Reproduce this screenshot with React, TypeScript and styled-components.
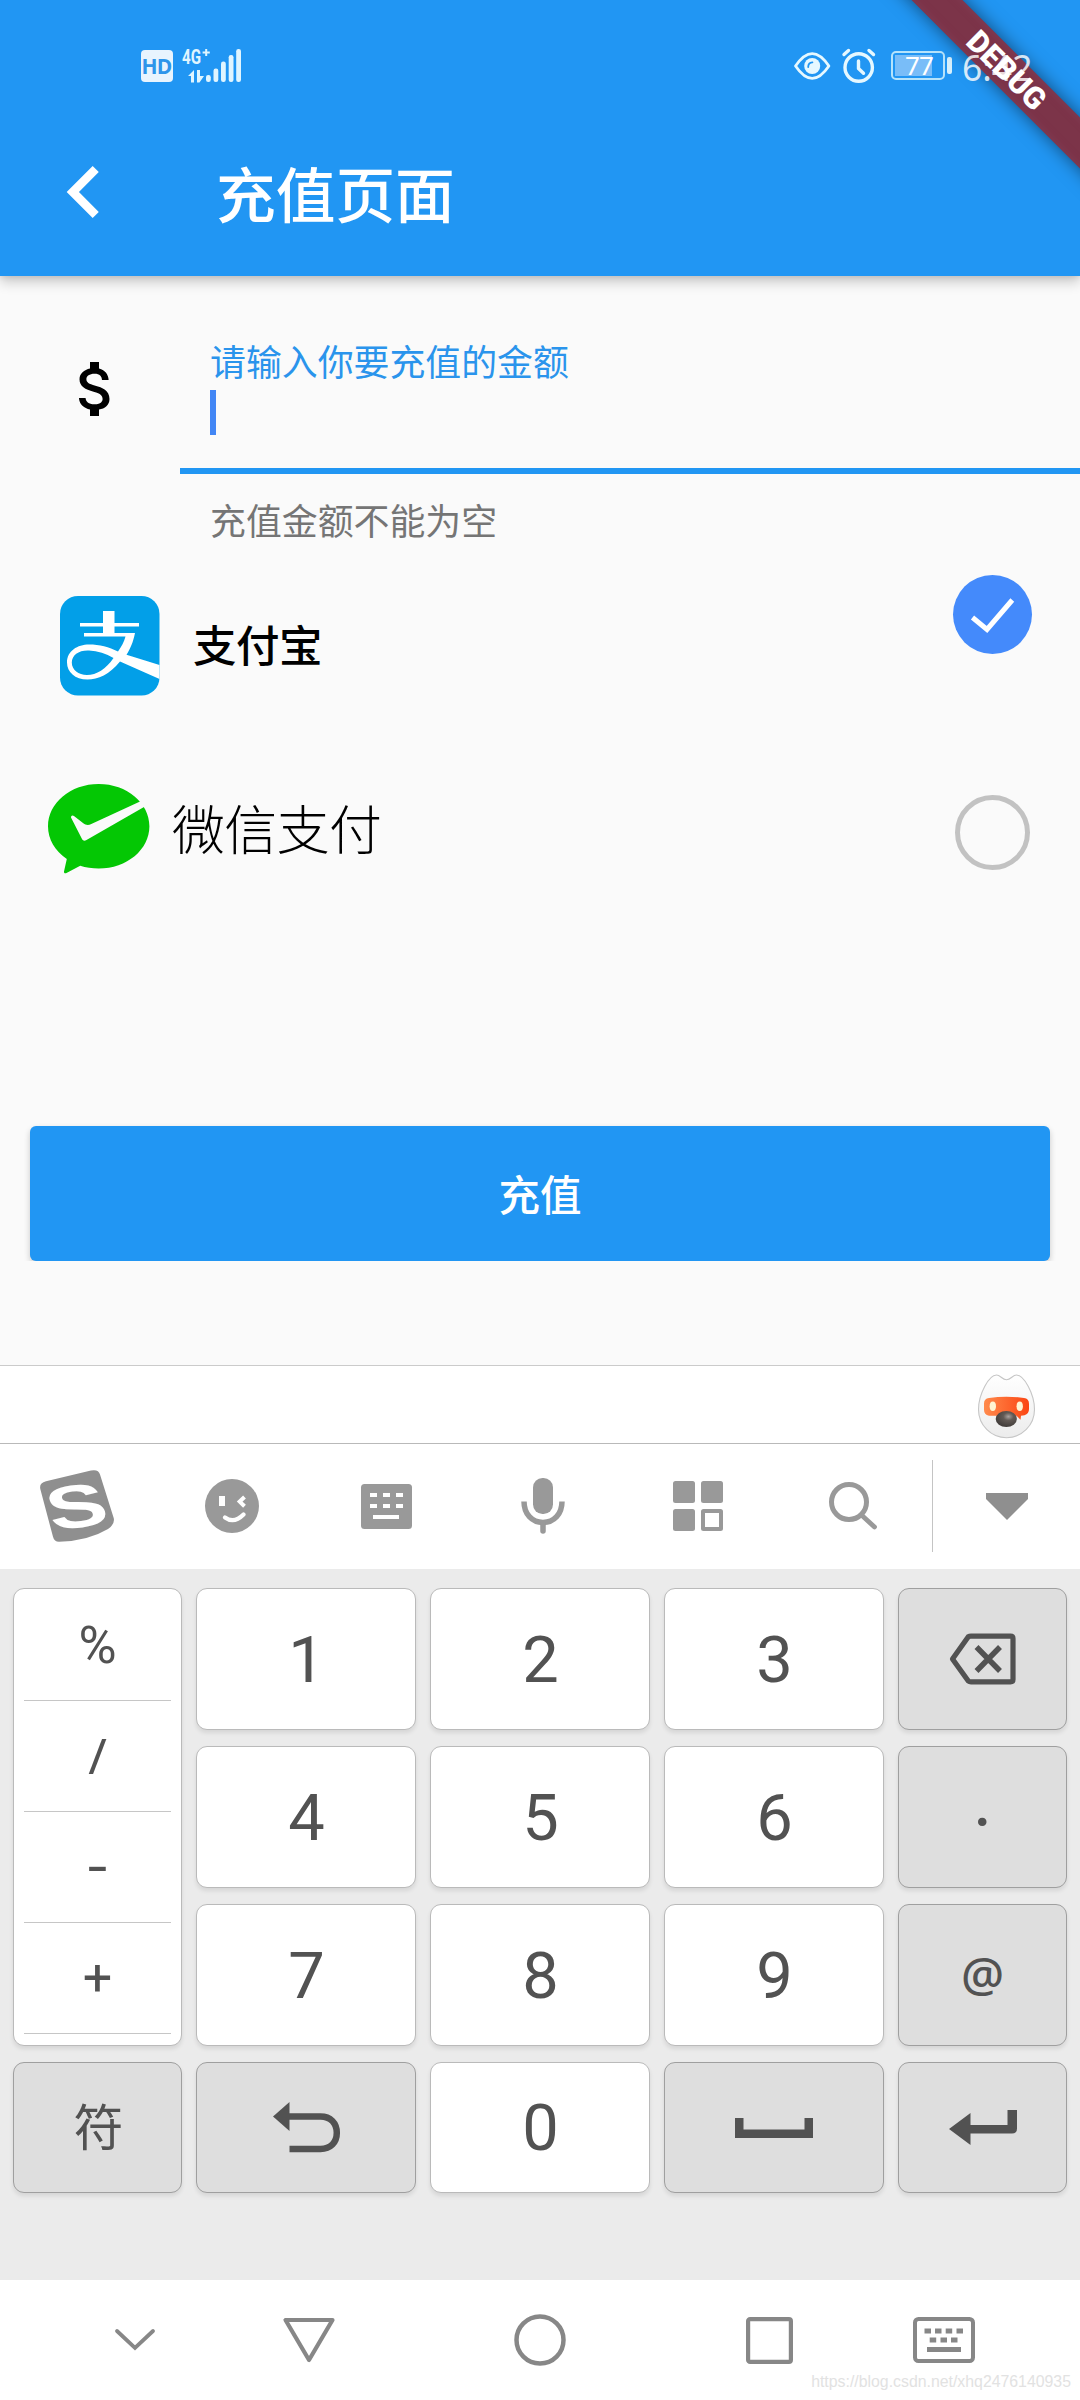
import React from "react";
import styled, { createGlobalStyle, css } from "styled-components";

const CJK = '"Noto Sans CJK SC", sans-serif';
const KEY_INK = "#525252";

const GlobalStyle = createGlobalStyle`
  html, body { margin: 0; padding: 0; background: #fafafa; }
  * { box-sizing: border-box; }
  svg { display: block; flex: none; overflow: visible; }
`;

const Screen = styled.div`
  width: 1080px;
  height: 2400px;
  display: flex;
  flex-direction: column;
  position: relative;
  overflow: hidden;
  background: #fafafa;
  font-family: ${CJK};
`;

/* ---------- header ---------- */
const Header = styled.header`
  flex: none;
  height: 276px;
  background: #2196f3;
  box-shadow: 0 6px 12px rgba(0, 0, 0, 0.2), 0 0 6px rgba(0, 0, 0, 0.12);
`;

const StatusBar = styled.div`
  height: 108px;
  padding: 23px 0 0 140.500px;
  display: flex;
  align-items: center;
`;

const HdBadge = styled.span`
  width: 32px;
  height: 32px;
  margin-right: 8.500px;
  border-radius: 4px;
  background: #e8f4fe;
  color: #2e95ea;
  font: 700 21px/32px "Open Sans", sans-serif;
  letter-spacing: -0.8px;
  text-align: center;
`;

const StatusRight = styled.div`
  margin-left: auto;
  width: 286px;
  display: flex;
  align-items: center;
`;

const Battery = styled.div`
  width: 54px;
  height: 29px;
  margin-left: 15px;
  padding: 2px;
  border: 2px solid #b5e3fb;
  border-radius: 5px;
`;

const BatteryLevel = styled.div`
  width: 37px;
  height: 21px;
  padding-left: 10px;
  background: #79bdf8;
  color: #fff;
  font: 400 26px/21px "Noto Sans", sans-serif;
  letter-spacing: -0.8px;
`;

const BatteryTip = styled.div`
  width: 5px;
  height: 17px;
  margin-left: 2px;
  border-radius: 2px;
  background: #d6f0fd;
`;

const Clock = styled.span`
  position: relative;
  z-index: 3;
  margin-left: 10px;
  padding-top: 2px;
  color: rgba(255, 255, 255, 0.82);
  font: 400 35.500px/40px "Noto Sans", sans-serif;
`;

const AppBar = styled.div`
  height: 168px;
  padding-left: 32px;
  display: flex;
  align-items: center;
`;

const Title = styled.h1`
  margin: 0 0 0 80px;
  color: #fff;
  font: 500 59.700px/80px ${CJK};
`;

const DebugRibbon = styled.div`
  position: absolute;
  z-index: 2;
  left: 857px;
  top: 52px;
  width: 300px;
  height: 36px;
  transform: rotate(45deg);
  background: #7c3449;
  box-shadow: 0 0 18px rgba(0, 0, 0, 0.5), inset 0 0 8px rgba(132, 64, 90, 0.8);
  color: #fff;
  font: 900 30.600px/37px Roboto, sans-serif;
  text-align: center;
`;

/* ---------- amount field ---------- */
const AmountRow = styled.section`
  height: 269px;
  display: flex;
`;

const CurrencyCell = styled.div`
  width: 180px;
  padding: 77px 0 0 60px;
`;

const Field = styled.div`
  flex: 1;
  padding-top: 65px;
`;

const FieldInner = styled.div`
  height: 133px;
  padding: 0 30px;
  border-bottom: 6px solid #2196f3;
`;

const FieldText = styled.div<{ $tone: string }>`
  height: 44px;
  color: ${(p) => p.$tone};
  font: 400 35.900px/38px ${CJK};
  white-space: nowrap;
`;

const Caret = styled.div`
  width: 6px;
  height: 45px;
  margin-top: 5px;
  background: #4286f5;
`;

const Helper = styled(FieldText)`
  margin: 26px 30px 0;
`;

/* ---------- payment methods ---------- */
const PayRow = styled.div<{ $height: number; $left: number; $top: number; $logoDrop: number }>`
  height: ${(p) => p.$height}px;
  padding: ${(p) => p.$top}px 0 0 ${(p) => p.$left}px;
  display: flex;
  align-items: flex-start;
  > svg:first-child { margin-top: ${(p) => p.$logoDrop}px; }
`;

const PayName = styled.span<{ $size: number; $weight: number; $gap: number; $drop: number; $track?: number }>`
  margin: ${(p) => p.$drop}px 0 0 ${(p) => p.$gap}px;
  font-family: ${CJK};
  font-size: ${(p) => p.$size}px;
  font-weight: ${(p) => p.$weight};
  line-height: 70px;
  letter-spacing: ${(p) => p.$track ?? 0}px;
  color: #000;
`;

const Check = styled.span<{ $checked?: boolean }>`
  margin-left: auto;
  flex: none;
  display: flex;
  border-radius: 50%;
  ${(p) =>
    p.$checked
      ? css`
          width: 79px;
          height: 79px;
          margin-right: 48px;
          background: #448afb;
        `
      : css`
          width: 75px;
          height: 75px;
          margin: 2px 50px 0 auto;
          border: 5px solid #c2c2c2;
        `}
`;

const SubmitButton = styled.button`
  width: 1020px;
  height: 135px;
  margin: 177px 30px 0;
  padding: 0;
  border: 0;
  border-radius: 6px;
  background: #2196f3;
  box-shadow: 0 3px 6px rgba(0, 0, 0, 0.2);
  clip-path: inset(-6px -10px 0 -10px);
  color: #fff;
  font: 500 41.500px/131px ${CJK};
`;

/* ---------- keyboard ---------- */
const CandidateBar = styled.div`
  height: 79px;
  margin-top: auto;
  padding: 7px 42px 0 0;
  display: flex;
  justify-content: flex-end;
  border-top: 1px solid #cbcbcb;
  border-bottom: 1px solid #b9b9b9;
  background: #fff;
`;

const Toolbar = styled.div`
  height: 125px;
  padding-bottom: 1px;
  display: flex;
  align-items: center;
  background: #fff;
`;

const Tool = styled.div<{ $shift?: number }>`
  width: 155px;
  padding-right: ${(p) => p.$shift ?? 0}px;
  display: flex;
  justify-content: center;
`;

const ToolDivider = styled.div`
  width: 1px;
  height: 92px;
  margin-left: 2px;
  background: #c4c4c4;
`;

const HideTool = styled(Tool)`
  width: 147px;
`;

const Keypad = styled.div`
  height: 711px;
  padding: 19px 13px;
  display: grid;
  grid-template-columns: 169px 220px 220px 220px 169px;
  grid-template-rows: 142px 142px 142px 131px;
  gap: 16px 14px;
  background: #ebebeb;
`;

const Key = styled.div<{ $dark?: boolean; $size?: number }>`
  display: flex;
  align-items: center;
  justify-content: center;
  border: 1px solid ${(p) => (p.$dark ? "#9f9f9f" : "#bababa")};
  border-radius: 11px;
  background: ${(p) => (p.$dark ? "#dedede" : "#fff")};
  box-shadow: 0 3px 4px rgba(0, 0, 0, 0.09);
  color: ${KEY_INK};
  font: 400 ${(p) => p.$size ?? 65}px/1 Roboto, ${CJK};
`;

const DigitKey = styled(Key)`
  padding: 2px 0 0 1px;
`;

const DotKey = styled(Key)`
  padding-top: 11px;
`;

const AtKey = styled(Key)`
  font-family: "Noto Sans", sans-serif;
  font-weight: 500;
  padding-bottom: 2px;
`;

const HanKey = styled(Key)`
  font-family: ${CJK};
  padding: 0 0 8px 2px;
`;

const SymbolColumn = styled(Key)`
  grid-row: span 3;
  flex-direction: column;
  justify-content: flex-start;
  padding: 0 10px;
`;

const SymbolItem = styled.div<{ $face?: string; $size?: number; $line?: number }>`
  width: 147px;
  height: 111px;
  border-bottom: 1px solid #c6c6c6;
  font: 400 ${(p) => p.$size ?? 52}px / ${(p) => p.$line ?? 110}px ${(p) => p.$face ?? "Roboto"}, sans-serif;
  text-align: center;
  &:first-child { height: 112px; }
`;

/* ---------- navigation ---------- */
const NavBar = styled.nav`
  height: 120px;
  padding-left: 115px;
  display: flex;
  align-items: center;
  position: relative;
  background: #fff;
`;

const NavItem = styled.span<{ $gap?: number }>`
  margin-left: ${(p) => p.$gap ?? 0}px;
`;

const Watermark = styled.span`
  position: absolute;
  right: 9px;
  bottom: 7px;
  color: #e2e2e2;
  font: 400 15.850px/22px "Liberation Sans", sans-serif;
  white-space: nowrap;
`;

/* ---------- drawings ---------- */
const Signal = () => (
  <svg width="62" height="36" viewBox="0 0 62 36" fill="#e0f5ff">
    <text x="1" y="16" fontFamily="Roboto" fontWeight="700" fontSize="20" textLength="19" lengthAdjust="spacingAndGlyphs">4G</text>
    <path d="M24.2 1h2v2.500h2.600v2h-2.600V8h-2V5.500h-2.600v-2h2.600z" />
    <path d="M13 22v12.500h-3V28H7zM16 22h3v6h4l-4.500 6.500H16z" />
    {[[25, 27], [32.500, 20.500], [40, 13.500], [47.700, 7], [55.200, 1]].map(([x, y]) => (
      <rect key={x} x={x} y={y} width="4.800" height={34 - y} rx="2.200" />
    ))}
  </svg>
);

const Eye = () => (
  <svg width="37" height="30" viewBox="0 0 37 30">
    <path d="M1.500 15C8 5.500 13.500 2.600 18.200 2.600S28.500 5.500 34.900 15C28.500 24.500 23 27.400 18.200 27.400S8 24.500 1.500 15z" fill="none" stroke="#e6f8ff" strokeWidth="2.800" strokeLinejoin="round" />
    <circle cx="18.200" cy="15" r="8" fill="#e6f8ff" />
    <path d="M14.200 16c0-3 1.500-4.500 4.200-4.700" fill="none" stroke="#2196f3" strokeWidth="1.800" strokeLinecap="round" />
  </svg>
);

const Alarm = () => (
  <svg width="34" height="34" viewBox="0 0 34 34" fill="none" stroke="#e6f8ff" strokeLinecap="round" strokeLinejoin="round">
    <circle cx="16.700" cy="18.500" r="13.700" strokeWidth="3.400" />
    <path d="M16.500 12v7.500l5 4.800" strokeWidth="3.400" />
    <path d="M2 5.500l4.500-4M27 1.500l4.500 4" strokeWidth="3.400" />
  </svg>
);

const AlipayLogo = () => (
  <svg width="100" height="100" viewBox="0 0 100 100">
    <rect width="99.500" height="99.500" rx="18" fill="#029fe8" />
    <g fill="#fff">
      <path d="M43 15h11.500v12H79v3.500H54.500V37H75c-2 9.500-4.500 15.500-8.500 21.700L99.500 69v14L60 65.500c-10.500 13-22 18-32.500 18C15 83.500 7 76 7 66.500 7 55 17.500 48.500 29 48.500c10.500 0 20 2.600 29 7 3.500-5 6-9.500 7.500-15H24v-3.500h19V30.500H20V27h23zM29 54.500C19 54 11.800 59 11.800 66.500S18.500 79 27 79c9.500 0 19-6 26.500-17C46 57.500 38 55 29 54.500z" />
    </g>
  </svg>
);

const WechatPayLogo = () => (
  <svg width="102" height="90" viewBox="0 0 102 90">
    <path d="M50.700 0C79 0 101.400 19 101.400 42.300S79 84.600 50.700 84.600c-6.500 0-13-1-18.500-2.800L18.500 89c-1.500.7-2.800 0-2.500-1.500L18.800 75C7 67 0 55.500 0 42.300 0 19 22.500 0 50.700 0z" fill="#04c704" />
    <path d="M23 33.500c0-2 1.500-2.800 3.300-1.300l9 7c2.500 2 5 2.200 8 .8L91.500 17.800 102 13v7l-6 3-57.500 33c-2 1.200-3.500.8-4.500-1z" fill="#fafafa" />
  </svg>
);

const CheckMark = () => (
  <svg width="79" height="79" viewBox="0 0 79 79" fill="none" stroke="#fff" strokeWidth="5">
    <path d="M19.500 42.500L34 54.500 59.300 25" />
  </svg>
);

const Mascot = () => (
  <svg width="62" height="68" viewBox="0 0 62 68">
    <defs>
      <linearGradient id="face" x1="0" y1="0" x2="0" y2="1">
        <stop offset="0" stopColor="#fff" />
        <stop offset="1" stopColor="#ececec" />
      </linearGradient>
      <linearGradient id="mask">
        <stop offset="0" stopColor="#ff8a4c" />
        <stop offset="1" stopColor="#fb4512" />
      </linearGradient>
      <radialGradient id="nose" cx="0.6" cy="0.35" r="0.6">
        <stop offset="0" stopColor="#aaa29e" />
        <stop offset="0.4" stopColor="#625a55" />
        <stop offset="1" stopColor="#45403d" />
      </radialGradient>
    </defs>
    <path d="M20.500 2c4 0 5.500 4.700 10 4.700S36.500 2 40.500 2C48 2 58.500 21 58.500 36.500S46 64.700 30.500 64.700 2.500 52 2.500 36.500 13 2 20.500 2z" fill="url(#face)" stroke="#c6c6c6" strokeWidth="1.100" />
    <path d="M13 25q17.500-2.500 35 0q5 .5 5 6v5q0 5-4.500 6.200l-3.500.6-.5 4-4-4H13q-5-.8-5-6V30.500q0-5 5-5.500z" fill="url(#mask)" />
    <ellipse cx="16.800" cy="33.300" rx="3.200" ry="4.800" fill="#fff4d2" />
    <ellipse cx="43.700" cy="33.300" rx="3.200" ry="4.800" fill="#fff4d2" />
    <ellipse cx="30.300" cy="46" rx="10.600" ry="8" fill="url(#nose)" />
  </svg>
);

const SogouLogo = () => (
  <svg width="78" height="76" viewBox="0 0 78 76">
    <path d="M8 13.300L53 2.500q7.500-1.500 9 4L75.700 50q1.500 6-5.700 11Q50 73 21 73.800q-4.800 0-6-5L2.300 21Q1 15 8 13.300z" fill="#8f8f8f" />
    <text transform="translate(38.500 38) rotate(-8) skewX(8) scale(1.46 1)" x="0" y="21.500" textAnchor="middle" fontFamily="Liberation Sans" fontWeight="700" fontSize="61" fill="#fff">S</text>
  </svg>
);

const Smiley = () => (
  <svg width="54" height="54" viewBox="0 0 54 54">
    <ellipse cx="27" cy="27" rx="27" ry="27" fill="#999" />
    <path d="M14 17h6v10h-6z" fill="#fff" />
    <path d="M39.500 18l-4.800 4.600 4.800 4.600" fill="none" stroke="#fff" strokeWidth="4" />
    <path d="M20 38.500q9 6.500 18.500-3" fill="none" stroke="#fff" strokeWidth="4.200" strokeLinecap="round" />
  </svg>
);

const KeyboardSolid = () => (
  <svg width="51" height="45" viewBox="0 0 51 45">
    <rect width="51" height="45" rx="3.500" fill="#999" />
    <path d="M9 9h7v4H9zM22 9h7v4h-7zM35 9h7v4h-7zM9 20h7v4H9zM22 20h7v4h-7zM35 20h7v4h-7zM12 31h26v4H12z" fill="#fff" />
  </svg>
);

const Mic = () => (
  <svg width="44" height="56" viewBox="0 0 44 56">
    <rect x="12" y="0" width="20" height="36" rx="9.500" fill="#999" />
    <path d="M3 23.500c0 12.500 8 21 19 21s19-8.500 19-21" fill="none" stroke="#999" strokeWidth="5.500" />
    <path d="M22 45v8" stroke="#999" strokeWidth="5.500" strokeLinecap="round" />
  </svg>
);

const Apps = () => (
  <svg width="50" height="50" viewBox="0 0 50 50" fill="#999">
    <rect width="22" height="22" rx="2.500" />
    <rect x="28" width="22" height="22" rx="2.500" />
    <rect y="28" width="22" height="22" rx="2.500" />
    <rect x="30" y="30" width="18" height="18" rx="0.500" fill="none" stroke="#999" strokeWidth="4" />
  </svg>
);

const Search = () => (
  <svg width="50" height="48" viewBox="0 0 50 48" fill="none" stroke="#999">
    <circle cx="21" cy="20" r="17.500" strokeWidth="5" />
    <path d="M34 33.500L46.500 45" strokeWidth="4.800" strokeLinecap="round" />
  </svg>
);

const HideArrow = () => (
  <svg width="42" height="27" viewBox="0 0 42 27">
    <path d="M0 0h42v6L21 27 0 6z" fill="#8f8f8f" />
  </svg>
);

const Backspace = () => (
  <svg width="68" height="52" viewBox="0 0 68 52" fill="none" stroke={KEY_INK}>
    <path d="M3.500 26L19.300 3.800Q20.300 3.200 22 3.200H61.500Q64 3.200 64 5.500v41q0 2.300-2.500 2.300H22q-1.700 0-2.700-.8z" strokeWidth="5.200" strokeLinejoin="round" />
    <path d="M27.500 14L51 38M51 14L27.500 38" strokeWidth="5.500" />
  </svg>
);

const UndoArrow = () => (
  <svg width="67" height="51" viewBox="0 0 67 51">
    <path d="M0 14.500L16.500 0v29z" fill={KEY_INK} />
    <path d="M15 14.500h32.500c10 0 16.300 6.500 16.300 16.300S57.500 47 47.500 47H16.500" fill="none" stroke={KEY_INK} strokeWidth="6.500" />
  </svg>
);

const SpaceBar = () => (
  <svg width="78" height="20" viewBox="0 0 78 20">
    <path d="M0 0h8.500v11.500h61V0H78v20H0z" fill={KEY_INK} />
  </svg>
);

const EnterArrow = () => (
  <svg width="68" height="36" viewBox="0 0 68 36">
    <path d="M0 19L21.500 3v12H58.500V0H68v18.500q0 5-5 5H21.500V35z" fill={KEY_INK} />
  </svg>
);

const NavKeyboard = () => (
  <svg width="62" height="46" viewBox="0 0 62 46">
    <rect x="2" y="2" width="58" height="42" rx="3.500" fill="none" stroke="#878787" strokeWidth="4" />
    <path d="M11.500 11.500h6.500v5h-6.500zM22 11.500h6.500v5H22zM32.700 11.500h6.500v5h-6.500zM43.500 11.500H50v5h-6.500zM16.700 20.500h6.500v5h-6.500zM27.500 20.500H34v5h-6.500zM38 20.500h6.500v5H38zM14 30h34v5H14z" fill="#878787" />
  </svg>
);

export default function App() {
  return (
    <>
      <GlobalStyle />
      <Screen>
        <Header>
          <StatusBar>
            <HdBadge>HD</HdBadge>
            <Signal />
            <StatusRight>
              <Eye />
              <svg width="11" height="1" />
              <Alarm />
              <Battery>
                <BatteryLevel>77</BatteryLevel>
              </Battery>
              <BatteryTip />
              <Clock>6:42</Clock>
            </StatusRight>
          </StatusBar>
          <AppBar>
            <svg width="104" height="104" viewBox="0 0 24 24" fill="#fff">
              <path d="M15.410 7.410L14 6l-6 6 6 6 1.410-1.410L10.830 12z" />
            </svg>
            <Title>充值页面</Title>
          </AppBar>
        </Header>
        <DebugRibbon>DEBUG</DebugRibbon>

        <AmountRow>
          <CurrencyCell>
            <svg width="72" height="72" viewBox="0 0 24 24">
              <path d="M11.800 10.900c-2.270-.59-3-1.200-3-2.150 0-1.090 1.010-1.850 2.700-1.850 1.780 0 2.440.85 2.500 2.100h2.210c-.07-1.720-1.120-3.300-3.210-3.810V3h-3v2.160c-1.940.42-3.500 1.680-3.500 3.610 0 2.310 1.910 3.460 4.700 4.130 2.500.6 3 1.480 3 2.410 0 .69-.49 1.790-2.700 1.790-2.060 0-2.870-.92-2.980-2.100h-2.200c.12 2.190 1.760 3.420 3.680 3.830V21h3v-2.150c1.950-.37 3.500-1.500 3.500-3.550 0-2.840-2.430-3.810-4.700-4.400z" />
            </svg>
          </CurrencyCell>
          <Field>
            <FieldInner>
              <FieldText $tone="#2a94ec">请输入你要充值的金额</FieldText>
              <Caret />
            </FieldInner>
            <Helper $tone="#757575">充值金额不能为空</Helper>
          </Field>
        </AmountRow>

        <PayRow $height={202} $left={60} $top={30} $logoDrop={21}>
          <AlipayLogo />
          <PayName $size={43.500} $weight={500} $gap={33} $drop={34} $track={-0.500}>支付宝</PayName>
          <Check $checked>
            <CheckMark />
          </Check>
        </PayRow>
        <PayRow $height={202} $left={48} $top={46} $logoDrop={-9}>
          <WechatPayLogo />
          <PayName $size={53} $weight={300} $gap={22} $drop={-1} $track={-0.700}>微信支付</PayName>
          <Check />
        </PayRow>

        <SubmitButton>充值</SubmitButton>

        <CandidateBar>
          <Mascot />
        </CandidateBar>
        <Toolbar>
          <Tool $shift={2}><SogouLogo /></Tool>
          <Tool $shift={1}><Smiley /></Tool>
          <Tool $shift={2}><KeyboardSolid /></Tool>
          <Tool><Mic /></Tool>
          <Tool><Apps /></Tool>
          <Tool><Search /></Tool>
          <ToolDivider />
          <HideTool><HideArrow /></HideTool>
        </Toolbar>
        <Keypad>
          <SymbolColumn>
            <SymbolItem $line={114}>%</SymbolItem>
            <SymbolItem $face="Noto Sans" $size={50} $line={108}>/</SymbolItem>
            <SymbolItem $face="Inter">-</SymbolItem>
            <SymbolItem>+</SymbolItem>
          </SymbolColumn>
          <DigitKey>1</DigitKey>
          <DigitKey>2</DigitKey>
          <DigitKey>3</DigitKey>
          <Key $dark><Backspace /></Key>
          <DigitKey>4</DigitKey>
          <DigitKey>5</DigitKey>
          <DigitKey>6</DigitKey>
          <DotKey $dark $size={76}>·</DotKey>
          <DigitKey>7</DigitKey>
          <DigitKey>8</DigitKey>
          <DigitKey>9</DigitKey>
          <AtKey $dark $size={48}>@</AtKey>
          <HanKey $dark $size={50}>符</HanKey>
          <Key $dark><UndoArrow /></Key>
          <DigitKey>0</DigitKey>
          <Key $dark><SpaceBar /></Key>
          <Key $dark><EnterArrow /></Key>
        </Keypad>
        <NavBar>
          <NavItem>
            <svg width="40" height="22" viewBox="0 0 40 22" fill="none" stroke="#878787" strokeWidth="3.800" strokeLinecap="round">
              <path d="M2 2l18 17L38 2" />
            </svg>
          </NavItem>
          <NavItem $gap={128}>
            <svg width="52" height="46" viewBox="0 0 52 46" fill="none" stroke="#878787" strokeWidth="4.200" strokeLinejoin="round">
              <path d="M2.500 3h47L26 43z" />
            </svg>
          </NavItem>
          <NavItem $gap={179}>
            <svg width="52" height="52" viewBox="0 0 52 52" fill="none" stroke="#878787" strokeWidth="4.500">
              <circle cx="26" cy="26" r="23.500" />
            </svg>
          </NavItem>
          <NavItem $gap={180}>
            <svg width="47" height="47" viewBox="0 0 47 47" fill="none" stroke="#878787" strokeWidth="4.200">
              <rect x="2.100" y="2.100" width="42.800" height="42.800" rx="2" />
            </svg>
          </NavItem>
          <NavItem $gap={120}>
            <NavKeyboard />
          </NavItem>
          <Watermark>https://blog.csdn.net/xhq2476140935</Watermark>
        </NavBar>
      </Screen>
    </>
  );
}
